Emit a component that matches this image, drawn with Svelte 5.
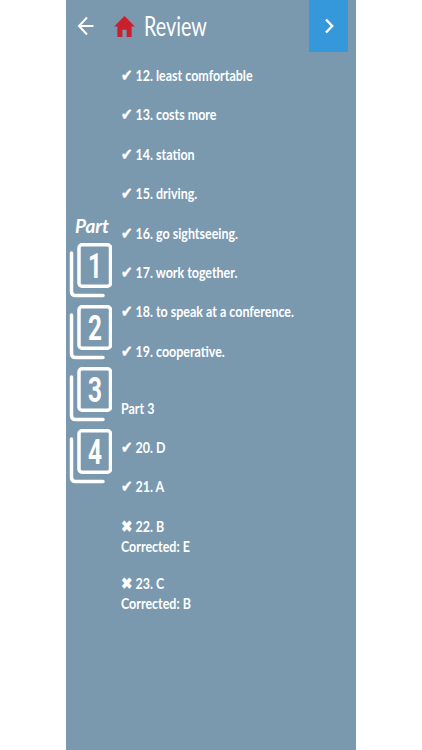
<script>
    const parts = [1, 2, 3, 4];
    const answers = [
        { ok: true, text: "12. least comfortable" },
        { ok: true, text: "13. costs more" },
        { ok: true, text: "14. station" },
        { ok: true, text: "15. driving." },
        { ok: true, text: "16. go sightseeing." },
        { ok: true, text: "17. work together." },
        { ok: true, text: "18. to speak at a conference." },
        { ok: true, text: "19. cooperative." },
        { heading: "Part 3" },
        { ok: true, text: "20. D" },
        { ok: true, text: "21. A" },
        { ok: false, text: "22. B", fix: "Corrected: E" },
        { ok: false, text: "23. C", fix: "Corrected: B" },
    ];
</script>

<div class="screen">
    <header>
        <svg class="back" viewBox="0 0 20 20" width="20" height="20">
            <path d="M17.5 10H3.5M11 1.5 3 10l8 8.5" />
        </svg>
        <svg class="home" viewBox="0 0 22 24" width="21" height="23">
            <path d="M11 1 21.8 12H18.5V23H13.2V15.5H8.8V23H3.5V12H.2Z" />
        </svg>
        <h1>Review</h1>
        <button aria-label="Next">
            <svg viewBox="0 0 12 18" width="12" height="18">
                <path d="M3 2.5 9.2 9 3 15.5" />
            </svg>
        </button>
    </header>

    <div class="body">
        <nav>
            <span class="part-label">Part</span>
            {#each parts as p}
                <svg class="badge" viewBox="0 0 44 58" width="44" height="58">
                    <path class="outer" d="M3.5 12V50.5Q3.5 54.5 7.5 54.5H35" />
                    <rect class="outer" x="11" y="3.8" width="31.5" height="41.4" rx="3" />
                    <text x="27" y="37" text-anchor="middle" textLength="14" lengthAdjust="spacingAndGlyphs">{p}</text>
                </svg>
            {/each}
        </nav>

        <ul>
            {#each answers as a}
                {#if a.heading}
                    <li class="heading">{a.heading}</li>
                {:else}
                    <li class:fixed={a.fix}>
                        <span class="mark">{a.ok ? "✔" : "✖"}</span>
                        {a.text}
                        {#if a.fix}<br />{a.fix}{/if}
                    </li>
                {/if}
            {/each}
        </ul>
    </div>
</div>

<style>
    :global(body) {
        margin: 0;
        background: #fff;
    }

    .screen {
        width: 290px;
        height: 750px;
        margin-left: 66px;
        background: #7a98ae;
        color: #fff;
        font-family: Lato, "Open Sans", sans-serif;
        overflow: hidden;
    }

    /* header */
    header {
        display: flex;
        align-items: center;
        height: 52px;
        padding: 0 8px 0 10px;
    }

    .back {
        margin-right: 18px;
    }

    .back path {
        fill: none;
        stroke: #fff;
        stroke-width: 2;
    }

    .home {
        margin-right: 9px;
    }

    .home path {
        fill: #c8202c;
    }

    h1 {
        margin: 0;
        flex: 1;
        font-size: 26px;
        font-weight: 400;
        transform: scaleX(0.76);
        transform-origin: left center;
    }

    button {
        width: 39px;
        height: 52px;
        border: 0;
        padding: 0;
        background: #3498db;
        display: flex;
        align-items: center;
        justify-content: center;
    }

    button path {
        fill: none;
        stroke: #fff;
        stroke-width: 2.4;
    }

    /* body */
    .body {
        display: flex;
    }

    nav {
        width: 55px;
        flex: none;
        display: flex;
        flex-direction: column;
        align-items: flex-start;
        padding: 162px 0 0 2px;
        box-sizing: border-box;
    }

    .part-label {
        font-size: 19px;
        font-weight: 700;
        font-style: italic;
        line-height: 24px;
        margin: 0 0 3px 7px;
    }

    .badge {
        margin-bottom: 4px;
    }

    .outer {
        fill: none;
        stroke: #fff;
        stroke-width: 3.5;
        stroke-linecap: round;
    }

    text {
        fill: #fff;
        font-family: Roboto, sans-serif;
        font-weight: 700;
        font-size: 35px;
    }

    ul {
        list-style: none;
        margin: 0;
        padding: 14px 0 0 0;
        font-size: 14.5px;
        font-weight: 700;
        line-height: 20px;
        transform: scaleX(0.86);
        transform-origin: left center;
    }

    li {
        margin-bottom: 19.4px;
    }

    li.fixed {
        margin-bottom: 17.5px;
    }

    .heading {
        margin: 37px 0 19px;
    }

    .mark {
        font-family: "DejaVu Sans", sans-serif;
        font-size: 16px;
        line-height: 0;
        -webkit-text-stroke: 0.4px #fff;
    }
</style>
